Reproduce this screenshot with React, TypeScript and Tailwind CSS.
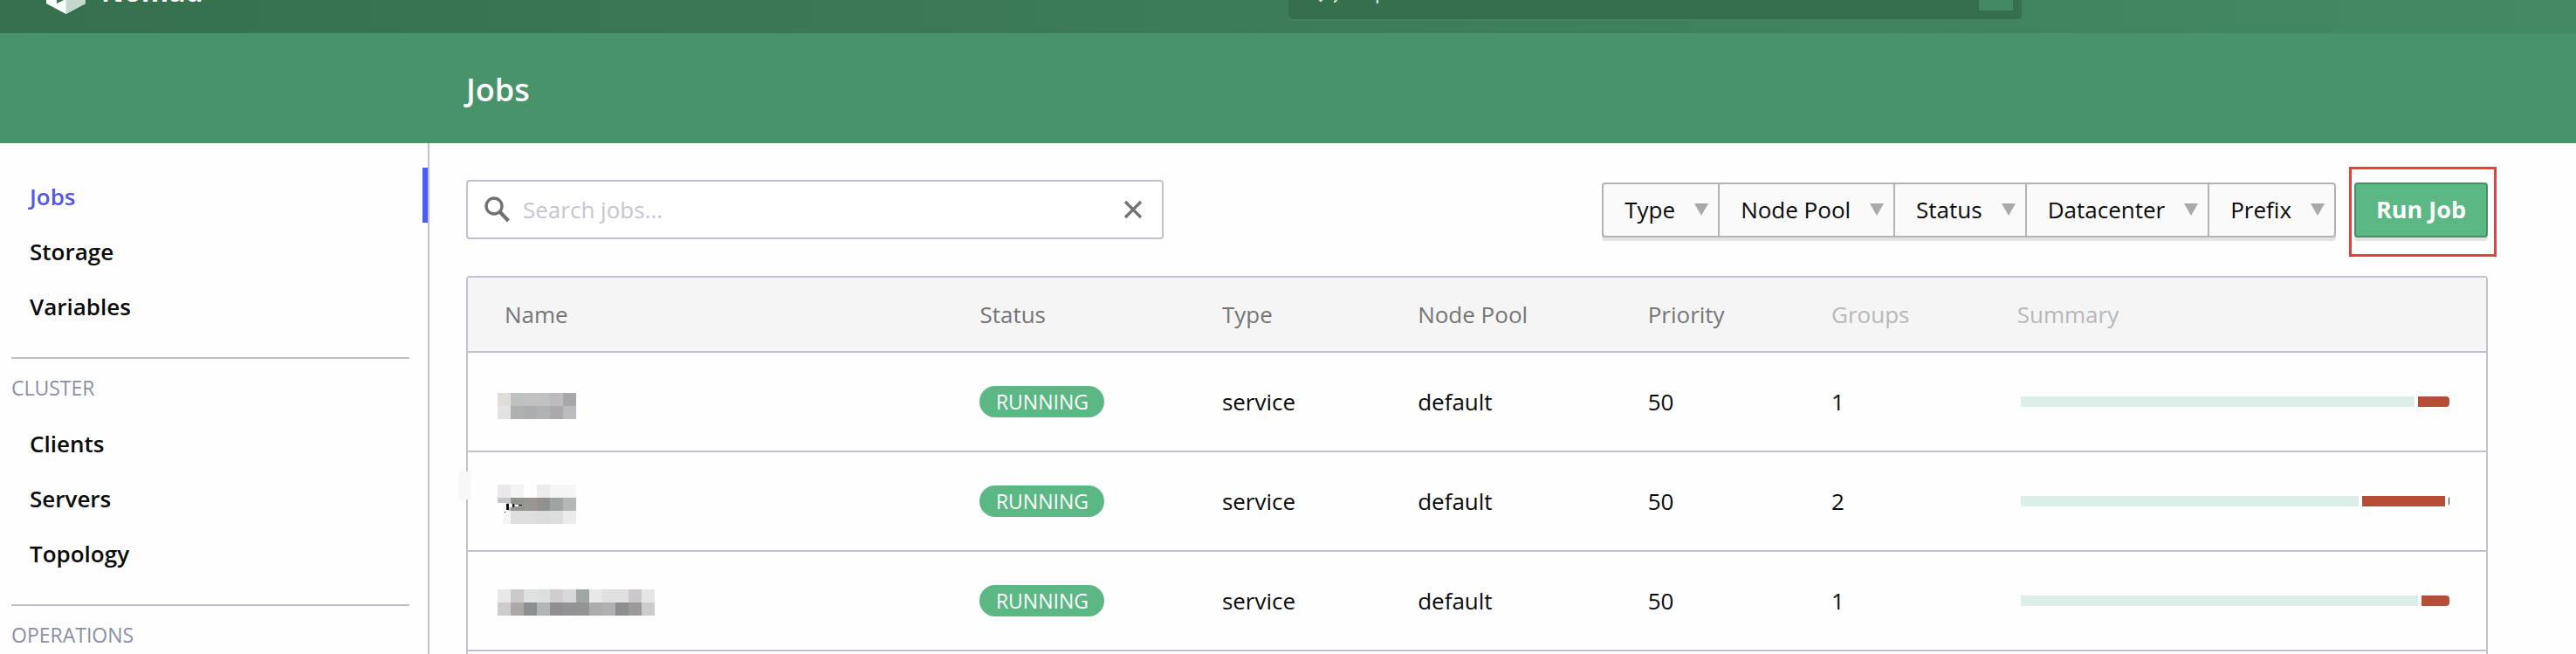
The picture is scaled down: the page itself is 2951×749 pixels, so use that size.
import React from "react";

type Job = {
  id: number;
  mosaic: { y: number; rows: string[][] };
  groups: number;
  summary: number[];
};

const jobs: Job[] = [
  {
    id: 1,
    mosaic: {
      y: 20,
      rows: [
        ["#e0ddd6", "#bdc1c0", "#c2c2c3", "#bfc1c2", "#bebbbe", "#a7a6a9"],
        ["#e3e2e2", "#aeb1b1", "#acadb0", "#b0b3b3", "#aca9ac", "#bcbbbf"],
      ],
    },
    groups: 1,
    summary: [450, 36],
  },
  {
    id: 2,
    mosaic: {
      y: 11,
      rows: [
        ["#eae8ea", "#f3f4f3", "#ffffff", "#ececec", "#f4f5f5", "#f4f6f5"],
        ["#c9c6c8", "#929490", "#999691", "#929191", "#9ea5a2", "#b3b8b6"],
        ["#f4f4f4", "#dfdfdf", "#dedede", "#dbdbdb", "#dcdddd", "#ebebeb"],
      ],
    },
    groups: 2,
    summary: [385, 95, 1],
  },
  {
    id: 3,
    mosaic: {
      y: 17,
      rows: [
        ["#e8e8e8", "#cbc9ca", "#e0e2e1", "#dce0dd", "#cfcdcf", "#d7d8db", "#a0a6a3", "#e6e9e8", "#e1dfe0", "#e1dfe0", "#cac8ca", "#e6e6e6"],
        ["#cdcbcc", "#aea7a7", "#8b9090", "#b2b5b6", "#918e91", "#929295", "#929495", "#adacad", "#b0b0b2", "#8c8d8f", "#9c999b", "#cdcccc"],
      ],
    },
    groups: 1,
    summary: [454, 32],
  },
];

const columns = [
  { label: "Name", cell: "w-[24.5%] pl-[42px]", muted: false },
  { label: "Status", cell: "w-[12%] pl-5", muted: false },
  { label: "Type", cell: "w-[9.7%] pl-5", muted: false },
  { label: "Node Pool", cell: "w-[11.4%] pl-5", muted: false },
  { label: "Priority", cell: "w-[9.1%] pl-5", muted: false },
  { label: "Groups", cell: "w-[9.2%] pl-5", muted: true },
  { label: "Summary", cell: "w-[24.1%] pl-5", muted: true },
];

const filters = ["Type", "Node Pool", "Status", "Datacenter", "Prefix"];
const segmentColors = ["bg-[#dcefe6]", "bg-[#b54d37]", "bg-[#25323a]"];

function NomadLogo() {
  return (
    <svg viewBox="0 0 45 52" className="h-[52px] w-[45px]" aria-hidden="true">
      <path d="M22.5 0 L45 13 V40 L22.5 52 L0 40 V13 Z" fill="#ffffff" />
      <path d="M22.5 26 L45 13 V40 L22.5 52 Z" fill="#c5d8cc" />
      <path d="M12 20 L22.5 26 V35 L18 37 L12 40 Z" fill="#36704d" />
    </svg>
  );
}

function Magnifier({ className }: { className: string }) {
  return (
    <svg viewBox="0 0 30 30" className={className} fill="none" stroke="currentColor" aria-hidden="true">
      <circle cx="12" cy="11" r="9" strokeWidth="3.4" />
      <path d="M18.5 17.5 L28.5 28" strokeWidth="4.4" />
    </svg>
  );
}

function Mosaic({ y, rows }: Job["mosaic"]) {
  return (
    <svg width={rows[0].length * 15} height="60" className="block" shapeRendering="crispEdges" aria-hidden="true">
      {rows.map((row, r) =>
        row.map((fill, c) => <rect key={`${r}-${c}`} x={c * 15} y={y + r * 15} width="15" height="15" fill={fill} />),
      )}
      {rows.length === 3 && (
        <>
          <path d="M0 32 H9 Q12 35 15 32 L12 42 Q6 45 6 56 H0 Z" fill="#ffffff" />
          <path d="M10 33 h3 v7 h-3 Z M17 33 h2 v4 h-2 Z M24 34 h4 v1 h-4 Z M8 42 h1 v1 h-1 Z" fill="#111111" />
          <path d="M14 33 h3 v4 h-3 Z M20 34 h4 v2 h-4 Z" fill="#ffffff" />
        </>
      )}
    </svg>
  );
}

function NavGroup({ items, active }: { items: string[]; active?: string }) {
  return (
    <ul>
      {items.map((item) => (
        <li key={item}>
          <a
            href="#"
            className={
              item === active
                ? "flex h-[63px] items-center border-r-[6px] border-[#4a5cfa] pt-[3px] pl-[34px] text-[#5457e0]"
                : "flex h-[63px] items-center pt-[3px] pl-[34px] text-[#0a0a0a]"
            }
          >
            {item}
          </a>
        </li>
      ))}
    </ul>
  );
}

function NavHeading({ children }: { children: React.ReactNode }) {
  return (
    <h2 className="mt-7 mr-[21px] ml-[13px] flex h-[66px] items-center border-t-2 border-[#bfc0cc] pt-[2px] text-[23px] font-normal text-[#8a8fa6]">
      {children}
    </h2>
  );
}

export default function App() {
  return (
    <div className="flex h-screen flex-col overflow-hidden bg-[#fefefe] font-['Open_Sans',sans-serif] text-[26px] text-[#0a0a0a]">
      <header className="flex h-[38px] shrink-0 items-end overflow-hidden bg-linear-to-r from-[#36704d] to-[#438a62]">
        <div className="grid h-24 w-full shrink-0 grid-cols-2 items-center">
          <a href="#" className="flex items-center gap-[18px] pl-[53px] text-[32px] font-bold text-white">
            <NomadLogo />
            Nomad
          </a>
          <label className="mb-1 flex h-[68px] w-[840px] items-center rounded-sm bg-[#366f4c] px-[10px] text-[#d3e4da] shadow-[0_2px_0_#47835f]">
            <Magnifier className="mr-3 h-[30px] w-[30px]" />
            <input
              aria-label="Jump to"
              placeholder="Jump to"
              className="min-w-0 flex-1 bg-transparent outline-none placeholder:text-[#d3e4da]"
            />
            <kbd className="flex h-12 w-[39px] items-center justify-center bg-[#438a62] font-['Open_Sans',sans-serif]">/</kbd>
          </label>
        </div>
      </header>

      <div className="flex h-[126px] shrink-0 items-center bg-[#48936a] pt-[3px] pl-[534px]">
        <h1 className="text-4xl font-semibold text-white">Jobs</h1>
      </div>

      <div className="flex min-h-0 flex-1">
        <nav className="w-[492px] shrink-0 border-r-2 border-[#c1c1d3] pt-7 font-semibold">
          <NavGroup items={["Jobs", "Storage", "Variables"]} active="Jobs" />
          <NavHeading>CLUSTER</NavHeading>
          <NavGroup items={["Clients", "Servers", "Topology"]} />
          <NavHeading>OPERATIONS</NavHeading>
        </nav>

        <main className="flex min-w-0 flex-1 flex-col pt-[42px] pr-[101px] pl-[42px]">
          <div className="mb-[42px] flex h-[68px] shrink-0 items-center justify-between">
            <label className="flex h-full w-[799px] items-center rounded border-2 border-[#bfc0d2] bg-white pr-[22px] pl-[18px] text-[#6f7173]">
              <Magnifier className="mr-[15px] h-[30px] w-[30px]" />
              <input
                aria-label="Search jobs"
                placeholder="Search jobs..."
                className="min-w-0 flex-1 bg-transparent outline-none placeholder:text-[#c2c5d4]"
              />
              <button type="button" aria-label="Clear search">
                <svg viewBox="0 0 22 22" className="h-[22px] w-[22px]" fill="none" stroke="currentColor" strokeWidth="3.2" aria-hidden="true">
                  <path d="M2 2 L20 20 M20 2 L2 20" />
                </svg>
              </button>
            </label>

            <div className="flex items-center gap-[21px]">
              <div className="flex h-[63px] rounded border-2 border-[#b3b3b3] bg-[#fafafa] shadow-[0_4px_0_#e3e3e3]">
                {filters.map((filter) => (
                  <button
                    key={filter}
                    type="button"
                    className="flex items-center gap-[22px] border-r-2 border-[#b3b3b3] pr-[11px] pl-6 last:border-r-0"
                  >
                    {filter}
                    <svg viewBox="0 0 16 14" className="h-[14px] w-4" aria-hidden="true">
                      <path d="M0 0 H16 L8 14 Z" fill="#a9a9a9" />
                    </svg>
                  </button>
                ))}
              </div>
              <div className="relative">
                <button
                  type="button"
                  className="block h-[63px] w-[153px] rounded border-2 border-[#478f67] bg-[#5bb783] text-[27px] font-bold whitespace-nowrap text-white shadow-[0_4px_0_#e3e3e3]"
                >
                  Run Job
                </button>
                <div className="pointer-events-none absolute -top-[18px] -right-[10px] -bottom-[22px] -left-[6px] border-3 border-[#e8403f]" />
              </div>
            </div>
          </div>

          <div className="relative min-h-0 flex-1 rounded-t border-2 border-b-0 border-[#c1c1d3]">
            <table className="w-full table-fixed border-separate border-spacing-0 text-left">
              <thead>
                <tr className="h-[86px]">
                  {columns.map((column) => (
                    <th
                      key={column.label}
                      scope="col"
                      className={`border-b-2 border-[#c1c1d3] bg-[#f5f5f5] font-normal ${column.cell} ${
                        column.muted ? "text-[#b8b8b8]" : "text-[#757575]"
                      }`}
                    >
                      {column.label}
                    </th>
                  ))}
                </tr>
              </thead>
              <tbody className="[&_td]:border-b-2 [&_td]:border-[#c1c1d3] [&_td]:p-0 [&_td]:pl-5">
                {jobs.map((job) => (
                  <tr key={job.id} className="h-[114px]">
                    <td>
                      <div className="pl-[14px]">
                        <Mosaic {...job.mosaic} />
                      </div>
                    </td>
                    <td>
                      <span className="flex h-9 w-[143px] items-center justify-center rounded-full bg-[#5bb783] text-[23px] text-white">
                        RUNNING
                      </span>
                    </td>
                    <td>service</td>
                    <td>default</td>
                    <td>50</td>
                    <td>{job.groups}</td>
                    <td>
                      <div className="mr-[42px] ml-1 flex h-3 gap-1 overflow-hidden rounded-r">
                        {job.summary.map((share, index) => (
                          <div key={index} className={`basis-0 ${segmentColors[index]}`} style={{ flexGrow: share }} />
                        ))}
                      </div>
                    </td>
                  </tr>
                ))}
              </tbody>
            </table>
            <div className="absolute top-[222px] -left-[11px] h-8 w-[15px] rounded-l bg-[#f6f7f9]" />
          </div>
        </main>
      </div>
    </div>
  );
}
